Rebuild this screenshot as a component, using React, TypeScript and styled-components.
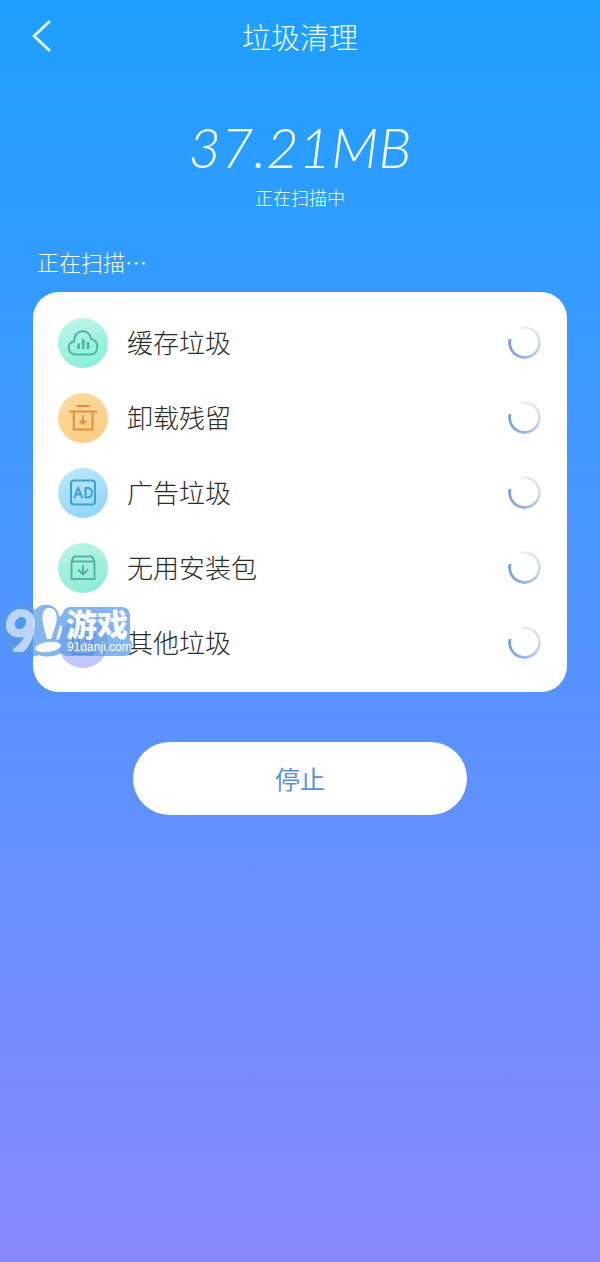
import React from "react";
import styled, { createGlobalStyle } from "styled-components";

const GlobalStyle = createGlobalStyle`
  *, *::before, *::after { box-sizing: border-box; }
  body {
    margin: 0;
    font-family: "Noto Sans CJK SC", sans-serif;
    font-weight: 300;
  }
`;

const Page = styled.div`
  position: relative;
  min-height: 100vh;
  display: flex;
  flex-direction: column;
  background: linear-gradient(180deg, #1e9fff 0%, #3a9aff 28%, #5f91ff 62%, #8888fb 100%);
  color: #f2ffff;
`;

const Header = styled.header`
  display: grid;
  grid-template-columns: 48px 1fr 48px;
  align-items: center;
  height: 72px;
  padding: 0 18px;
`;

const BackButton = styled.button`
  display: flex;
  align-items: center;
  justify-content: center;
  height: 48px;
  padding: 0;
  border: 0;
  background: none;
  color: #dcfaff;
  cursor: pointer;
`;

const Title = styled.h1`
  margin: 0;
  font-size: 29px;
  line-height: 40px;
  font-weight: 300;
  text-align: center;
`;

const Summary = styled.section`
  display: flex;
  flex-direction: column;
  align-items: center;
  padding-top: 43px;
`;

const Amount = styled.p`
  margin: 0;
  font-family: Lato, "Liberation Sans", sans-serif;
  font-style: italic;
  font-weight: 300;
  font-size: 56px;
  line-height: 64px;
`;

const Status = styled.p`
  margin: 4px 0 0;
  font-size: 18px;
  line-height: 28px;
`;

const Main = styled.main`
  display: flex;
  flex-direction: column;
  padding: 34px 33px 0;
`;

const ListTitle = styled.h2`
  margin: 0 0 15px 4px;
  font-size: 22px;
  line-height: 32px;
  font-weight: 300;
`;

const Card = styled.ul`
  margin: 0;
  padding: 13px 26px 12px 25px;
  list-style: none;
  border-radius: 26px;
  background: #fff;
`;

const Row = styled.li`
  display: flex;
  align-items: center;
  gap: 19px;
  height: 75px;
`;

const Badge = styled.span<{ $from: string; $to: string; $ink: string }>`
  display: flex;
  flex: none;
  width: 50px;
  height: 50px;
  border-radius: 50%;
  background: linear-gradient(160deg, ${(p) => p.$from}, ${(p) => p.$to});
  color: ${(p) => p.$ink};
`;

const Label = styled.span`
  flex: 1;
  padding-bottom: 2px;
  font-size: 26px;
  line-height: 36px;
  color: #2b2b2b;
`;

const Spinner = styled.span`
  flex: none;
  width: 33px;
  height: 33px;
  border-radius: 50%;
  background: conic-gradient(
    from 0deg,
    #e8edf5 0deg,
    #d6e0f1 80deg,
    #adc3ec 150deg,
    #85a5e2 220deg,
    #789cdf 284deg,
    transparent 285deg,
    transparent 335deg,
    #f3f6fb 350deg,
    #e8edf5 360deg
  );
  mask: radial-gradient(circle closest-side, transparent 13px, #000 14px, #000 16px, transparent 17px);
`;

const StopButton = styled.button`
  align-self: center;
  width: 63%;
  min-width: 200px;
  max-width: 334px;
  height: 73px;
  margin: 50px 0;
  padding: 0 0 2px;
  border: 0;
  border-radius: 37px;
  background: #fff;
  color: #5b8fd6;
  font-family: inherit;
  font-size: 25px;
  font-weight: 400;
  cursor: pointer;
`;

const Watermark = styled.svg`
  position: absolute;
  left: 0;
  top: 600px;
  pointer-events: none;
`;

const iconProps = {
  width: 50,
  height: 50,
  viewBox: "0 0 50 50",
  fill: "none",
  stroke: "currentColor",
  strokeWidth: 2,
  strokeLinecap: "round" as const,
  strokeLinejoin: "round" as const,
  "aria-hidden": true,
};

const CloudIcon = () => (
  <svg {...iconProps}>
    <path d="M18 36.5C13.500 36.500 10.700 33.500 10.700 29.800C10.700 26.300 13 23.800 16.200 23.200C16 17.200 19.800 13.200 24.700 13.200C29.300 13.200 32.500 16.300 33 21C36.700 21.300 39.300 24.700 39.300 28.700C39.300 33.200 36.500 36.500 32 36.500Z" />
    <path d="M20.500 25.500V31M25.200 21V31M30 24V31" strokeWidth="2.600" strokeLinecap="butt" />
  </svg>
);

const UninstallIcon = () => (
  <svg {...iconProps} strokeLinecap="butt" strokeLinejoin="miter">
    <path d="M18.500 13H31.500M11 18.500H39M15.800 18.500V36.500H34.500V18.500" />
    <path d="M25 22V31M21.500 27.500L25 31L28.500 27.500" strokeWidth="1.800" />
  </svg>
);

const AdIcon = () => (
  <svg {...iconProps}>
    <rect x="13" y="12.500" width="24" height="24" rx="3" />
    <path d="M16.500 29.500L20.200 19.500L24 29.500M17.700 26.500H22.700" />
    <path d="M27.500 20V29.500H29Q34 29.500 34 24.700T29 20Z" />
  </svg>
);

const PackageIcon = () => (
  <svg {...iconProps}>
    <path d="M13.500 18.500V36H36.500V18.500L34 13.500H16L13.500 18.500H36.500" />
    <path d="M25 23V31M20.500 27L25 31.500L29.500 27" />
  </svg>
);

const OtherIcon = () => (
  <svg {...iconProps}>
    <path d="M14.500 17.500V36H34.500V17.500M12 17.500H37M19 12.500H30" />
    <path d="M21 22V31M28 22V31" />
  </svg>
);

const items = [
  { label: "缓存垃圾", icon: <CloudIcon />, from: "#c3f5ea", to: "#82eed8", ink: "#4fb5a3" },
  { label: "卸载残留", icon: <UninstallIcon />, from: "#fbdc9d", to: "#ffcb86", ink: "#e58e3f" },
  { label: "广告垃圾", icon: <AdIcon />, from: "#bce9fb", to: "#8fd3fa", ink: "#429fc8" },
  { label: "无用安装包", icon: <PackageIcon />, from: "#bdf3e8", to: "#86ecd5", ink: "#57b3a1" },
  { label: "其他垃圾", icon: <OtherIcon />, from: "#c9cdfa", to: "#c0c5fb", ink: "#6a76cf" },
];

const SiteMark = () => (
  <Watermark width="136" height="60" viewBox="0 0 136 60" role="img" aria-label="91游戏 91danji.com">
    <path
      d="M22 5C28 5 32 7 35 10C39 4 50 3 55 8C58 11 59 14 59 17Q62 15 63 13Q64 8 69 7H122Q129 8 130 14V40Q133 43 132 47L131 53Q129 56 124 56H66Q63 55 61 53Q50 59 38 55Q34 58 29 56H15Q8 55 10 46C4 43 1 35 2 25C4 13 11 5 22 5Z"
      fill="#5699e9"
      fillOpacity="0.72"
    />
    <path
      d="M21 9C30 9 36 15 35 26C34 38 28 49 23 52H14Q12 51 14 48Q21 44 24 37C13 39 5 33 6 24C7 15 13 9 21 9ZM21 17C17 18 14 22 15 26C16 30 21 30 24 27C28 22 26 16 21 17Z"
      fill="#fff"
      fillOpacity="0.6"
      fillRule="evenodd"
    />
    <path d="M48 8C56 7 58 15 56 24L51 39H47L44 28C41 17 42 9 48 8Z" fill="#fff" fillOpacity="0.95" />
    <path d="M56 39L60 25Q63 25 62 31L59 40Z" fill="#fff" fillOpacity="0.8" />
    <ellipse cx="48" cy="47" rx="13" ry="5" fill="#fff" fillOpacity="0.95" transform="rotate(-8 48 47)" />
    <text x="66" y="36" fontFamily="Noto Sans CJK SC, sans-serif" fontWeight="900" fontSize="31" fill="#fff" fillOpacity="0.95">
      游戏
    </text>
    <text x="67" y="51" fontFamily="Liberation Sans, sans-serif" fontWeight="400" fontSize="12" fill="#fff">
      91danji.com
    </text>
  </Watermark>
);

export default function App() {
  return (
    <Page>
      <GlobalStyle />
      <Header>
        <BackButton type="button" aria-label="返回">
          <svg width="24" height="36" viewBox="0 0 24 36" fill="none" stroke="currentColor" strokeWidth="3" strokeLinecap="round" strokeLinejoin="round" aria-hidden="true">
            <path d="M19 4L4 18L19 32" />
          </svg>
        </BackButton>
        <Title>垃圾清理</Title>
      </Header>
      <Summary>
        <Amount>37.21MB</Amount>
        <Status>正在扫描中</Status>
      </Summary>
      <Main>
        <ListTitle>正在扫描…</ListTitle>
        <Card>
          {items.map((item) => (
            <Row key={item.label}>
              <Badge $from={item.from} $to={item.to} $ink={item.ink}>
                {item.icon}
              </Badge>
              <Label>{item.label}</Label>
              <Spinner role="status" aria-label="扫描中" />
            </Row>
          ))}
        </Card>
        <StopButton type="button">停止</StopButton>
      </Main>
      <SiteMark />
    </Page>
  );
}
